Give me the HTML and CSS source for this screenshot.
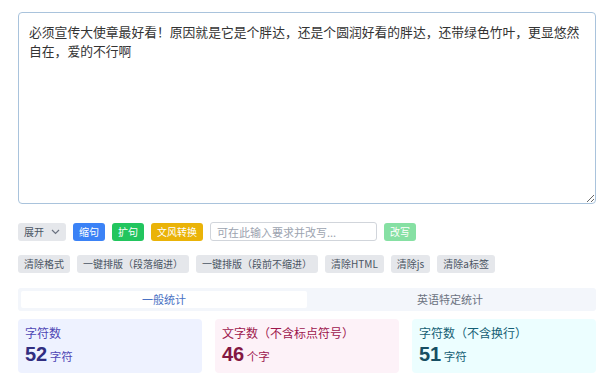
FILE: index.html
```html
<!DOCTYPE html>
<html>
  <head>
    <title>文本工具</title>
    <link rel="stylesheet" href="styles.css">
  </head>
  <body>
    <div class="page">
      <textarea class="editor">必须宣传大使章最好看！原因就是它是个胖达，还是个圆润好看的胖达，还带绿色竹叶，更显悠然自在，爱的不行啊</textarea>

      <div class="toolbar">
        <button class="btn btn-gray">展开
          <svg class="chev" width="9" height="6" viewBox="0 0 9 6"><path d="M1 1l3.5 3.5L8 1" fill="none" stroke="#6b7280" stroke-width="1.2"/></svg>
        </button>
        <button class="btn btn-blue">缩句</button>
        <button class="btn btn-green">扩句</button>
        <button class="btn btn-amber">文风转换</button>
        <input class="prompt" type="text" placeholder="可在此输入要求并改写...">
        <button class="btn btn-light-green">改写</button>
      </div>

      <div class="toolbar">
        <button class="btn btn-gray">清除格式</button>
        <button class="btn btn-gray">一键排版（段落缩进）</button>
        <button class="btn btn-gray">一键排版（段前不缩进）</button>
        <button class="btn btn-gray">清除HTML</button>
        <button class="btn btn-gray">清除js</button>
        <button class="btn btn-gray">清除a标签</button>
      </div>

      <div class="tabs">
        <div class="tab active">一般统计</div>
        <div class="tab">英语特定统计</div>
      </div>

      <div class="stats">
        <div class="stat stat-indigo">
          <div class="stat-label">字符数</div>
          <div class="stat-value"><b>52</b> 字符</div>
        </div>
        <div class="stat stat-pink">
          <div class="stat-label">文字数（不含标点符号）</div>
          <div class="stat-value"><b>46</b> 个字</div>
        </div>
        <div class="stat stat-cyan">
          <div class="stat-label">字符数（不含换行）</div>
          <div class="stat-value"><b>51</b> 字符</div>
        </div>
      </div>
    </div>
  </body>
</html>
```

FILE: styles.css
```css
body {
  margin: 0;
  padding: 0;
  background: #ffffff;
  font-family: "Noto Sans CJK SC", "Noto Sans", sans-serif;
  color: #333;
}
.page {
  width: 578px;
  margin-left: 18px;
  padding-top: 12px;
}
.editor {
  display: block;
  box-sizing: border-box;
  width: 100%;
  height: 192px;
  margin: 0;
  padding: 9px 8px 9px 10px;
  border: 1px solid #a9c3dc;
  border-radius: 4px;
  font-family: "Noto Sans CJK SC", sans-serif;
  font-size: 12.8px;
  line-height: 19px;
  color: #333;
  resize: vertical;
  outline: none;
}
.toolbar {
  display: flex;
  align-items: center;
  gap: 7px;
  margin-top: 18px;
}
.toolbar + .toolbar {
  margin-top: 14px;
}
.btn {
  display: flex;
  align-items: center;
  gap: 5px;
  height: 18px;
  padding: 0 6px;
  border: none;
  border-radius: 3px;
  font-family: "Noto Sans CJK SC", sans-serif;
  font-size: 10px;
  line-height: 18px;
  cursor: pointer;
}
.btn-gray {
  background: #e5e7eb;
  color: #4b5563;
}
.btn-blue {
  background: #3b82f6;
  color: #fff;
}
.btn-green {
  background: #22c55e;
  color: #fff;
}
.btn-amber {
  background: #eab308;
  color: #fff;
}
.btn-light-green {
  background: #86e0a3;
  color: #fff;
}
.chev {
  margin-left: 2px;
}
.prompt {
  box-sizing: border-box;
  width: 167px;
  height: 19px;
  padding: 0 6px;
  border: 1px solid #d1d5db;
  border-radius: 3px;
  font-family: "Noto Sans CJK SC", sans-serif;
  font-size: 11px;
  outline: none;
}
.prompt::placeholder {
  color: #9ca3af;
}
.tabs {
  display: flex;
  margin-top: 15px;
  padding: 3px;
  height: 17px;
  background: #f3f6fb;
  border-radius: 3px;
}
.tab {
  flex: 1;
  text-align: center;
  font-size: 11px;
  line-height: 17px;
  color: #6b7280;
}
.tab.active {
  background: #ffffff;
  color: #4a72c4;
  border-radius: 2px;
}
.stats {
  display: grid;
  grid-template-columns: repeat(3, 1fr);
  gap: 13px;
  margin-top: 8px;
}
.stat {
  height: 54px;
  padding: 5px 7px;
  box-sizing: border-box;
  border-radius: 4px;
}
.stat-label {
  font-size: 12px;
  line-height: 18px;
}
.stat-value {
  font-size: 11.5px;
  line-height: 24px;
}
.stat-value b {
  font-family: "Liberation Sans", Arial, sans-serif;
  font-size: 20px;
  font-weight: bold;
}
.stat-indigo {
  background: #eef2ff;
  color: #4f46b5;
}
.stat-indigo b {
  color: #312e81;
}
.stat-pink {
  background: #fdf2f8;
  color: #9d174d;
}
.stat-pink b {
  color: #831843;
}
.stat-cyan {
  background: #ecfeff;
  color: #155e75;
}
.stat-cyan b {
  color: #164e63;
}
```
